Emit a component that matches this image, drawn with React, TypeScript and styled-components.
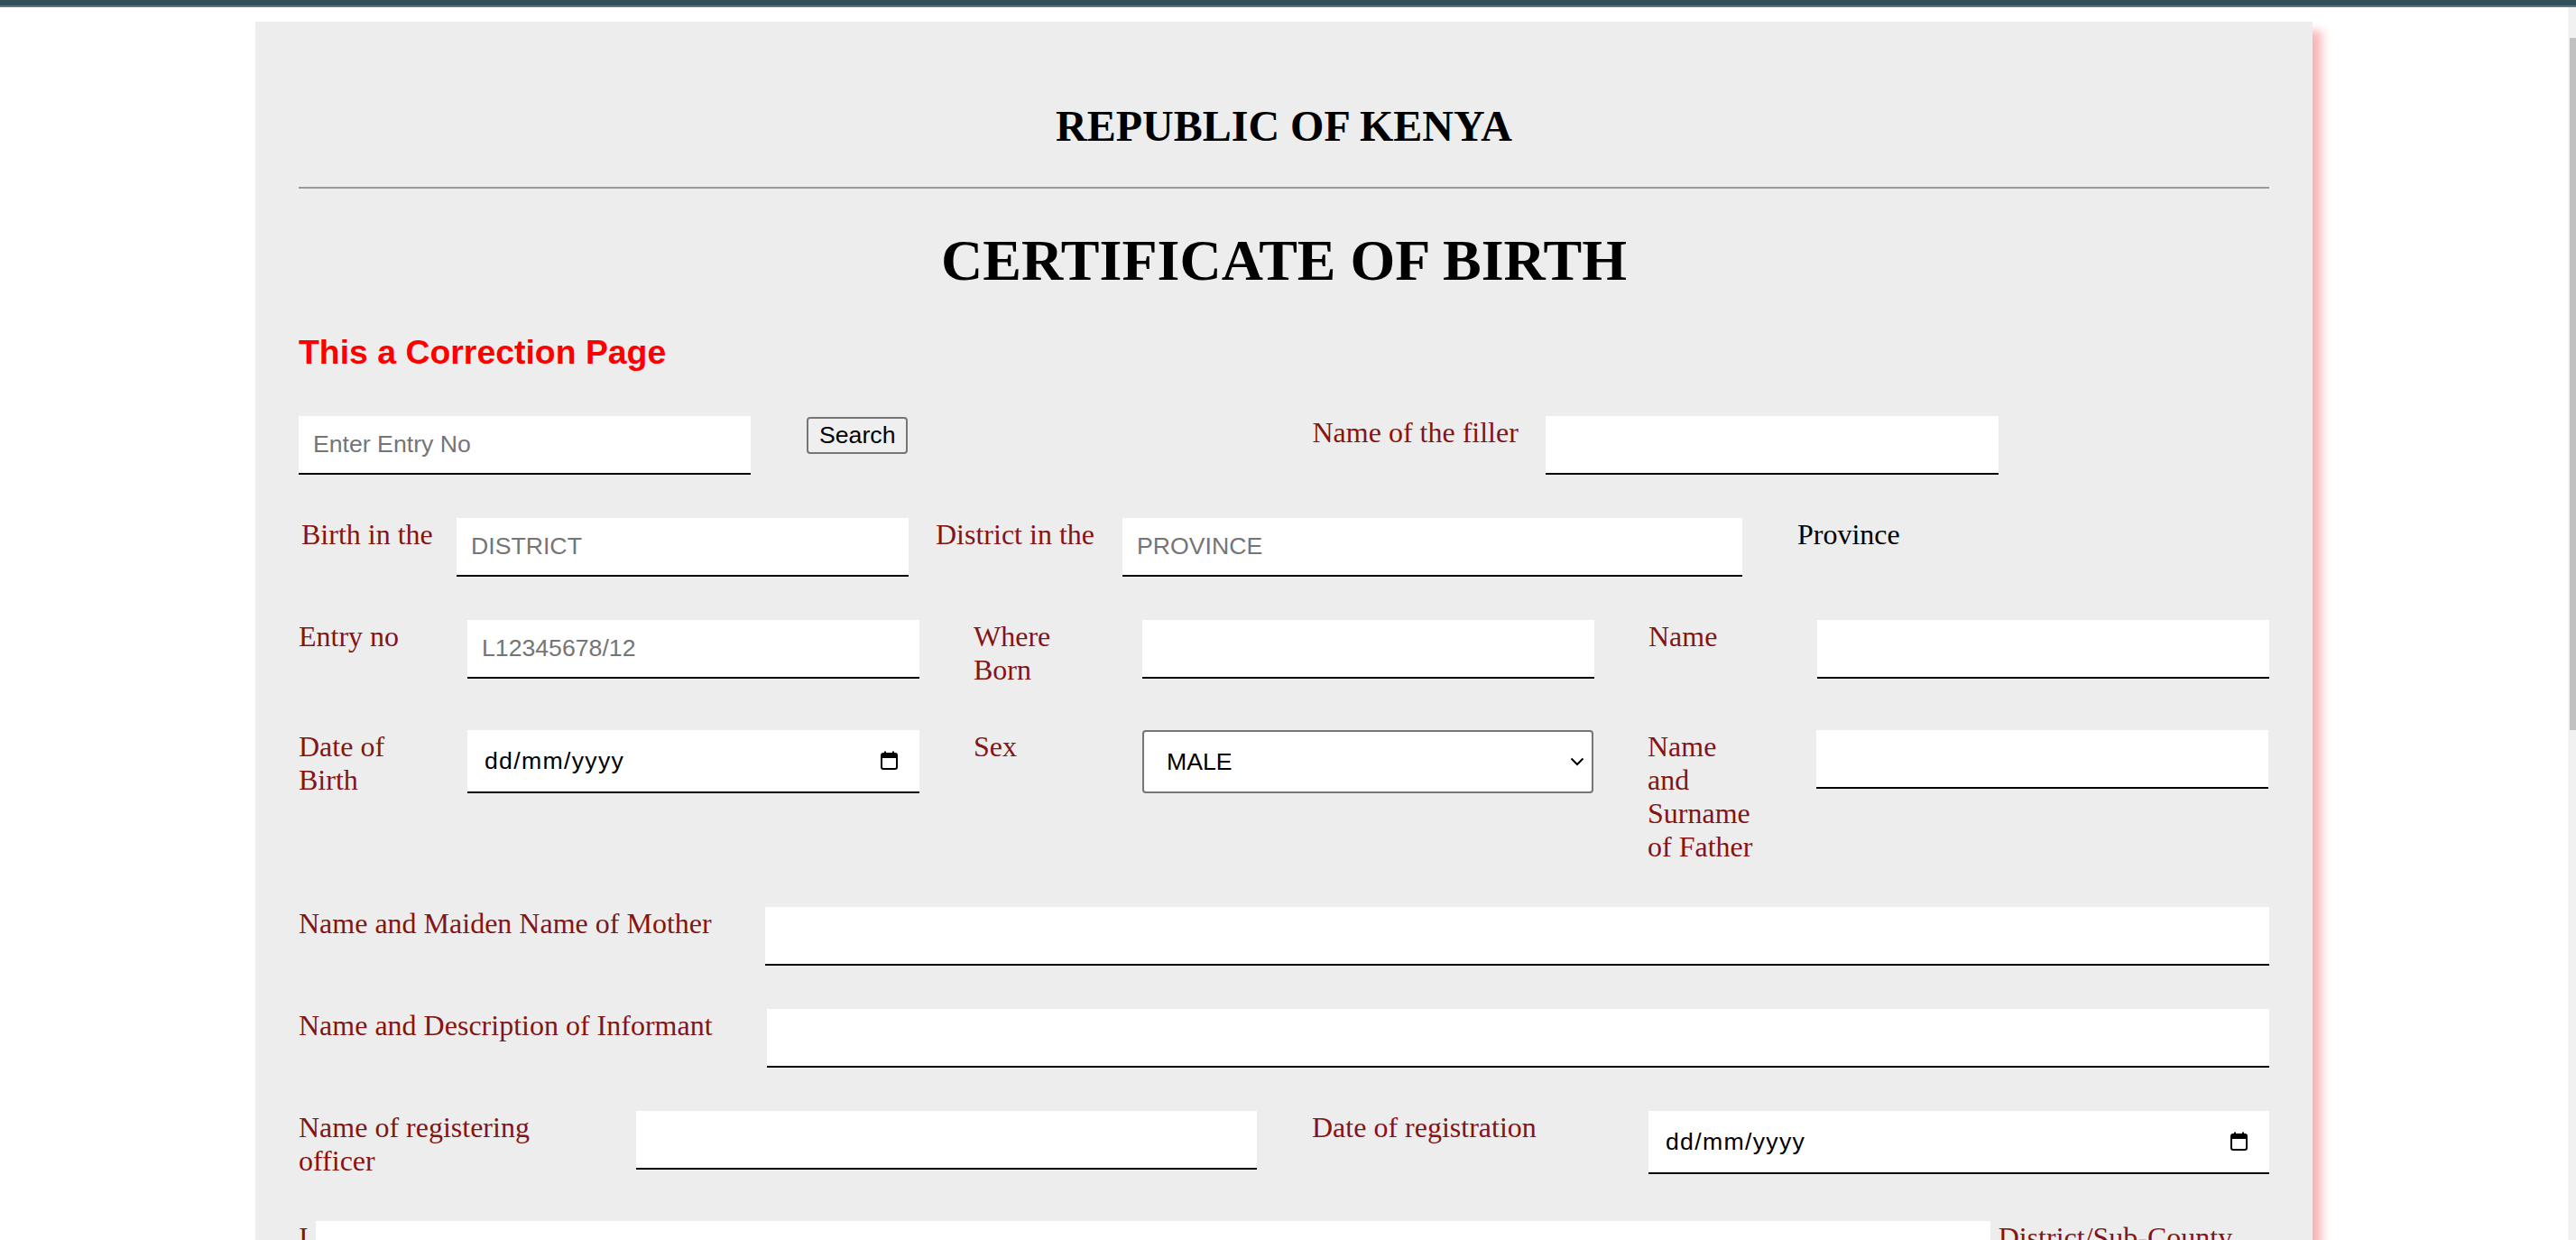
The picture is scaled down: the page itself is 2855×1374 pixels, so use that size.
import React from "react";
import styled, { createGlobalStyle } from "styled-components";

const GlobalStyle = createGlobalStyle`
  html, body {
    margin: 0;
    padding: 0;
    height: 100%;
    overflow: hidden;
    background: #ffffff;
  }
  body {
    font-family: "Liberation Serif", "Times New Roman", serif;
  }
`;

const TopBar = styled.div`
  height: 6px;
  background: #32505c;
  border-bottom: 2px solid #5b7682;
`;

const Viewport = styled.div`
  display: flex;
  height: calc(100vh - 8px);
`;

const Scroller = styled.main`
  flex: 1;
  min-width: 0;
  overflow-y: auto;
  scrollbar-width: none;
`;

const Rail = styled.aside`
  flex: none;
  width: 9px;
  box-sizing: border-box;
  padding: 34px 0 0 2px;
  background: #f1f1f1;
`;

const Thumb = styled.div`
  width: 7px;
  height: 767px;
  background: #c1c1c1;
`;

const Sheet = styled.section`
  width: 2280px;
  box-sizing: border-box;
  margin: 16px auto 40px;
  padding: 48px 48px 500px;
  background: #ededed;
  box-shadow: 10px 10px 10px #f8b4b4;
`;

const Country = styled.h2`
  margin: 40px 0;
  font-size: 48px;
  font-weight: bold;
  line-height: normal;
  text-align: center;
  color: #000;
`;

const Rule = styled.hr`
  height: 0;
  margin: 0 0 16px;
  border: none;
  border-top: 2px solid #9a9a9a;
`;

const Heading = styled.h1`
  margin: 43px 0;
  font-size: 64px;
  font-weight: bold;
  line-height: normal;
  text-align: center;
  color: #000;
`;

const Notice = styled.h3`
  margin: 37px 0 49px;
  font-family: "Liberation Sans", Arial, sans-serif;
  font-size: 37.4px;
  font-weight: bold;
  line-height: normal;
  color: #ff0000;
`;

const Row = styled.div<{ $gap?: number }>`
  display: flex;
  align-items: flex-start;
  gap: ${(p) => p.$gap ?? 0}px;
  margin-bottom: 48px;
`;

const Group = styled.div`
  display: flex;
  align-items: flex-start;
  flex: none;
`;

const Label = styled.label<{ $w?: number; $mr?: number; $ml?: number; $plain?: boolean }>`
  flex: none;
  width: ${(p) => (p.$w ? `${p.$w}px` : "auto")};
  margin: 0 ${(p) => p.$mr ?? 0}px 0 ${(p) => p.$ml ?? 0}px;
  font-size: 32px;
  line-height: normal;
  color: ${(p) => (p.$plain ? "#000000" : "#851414")};
`;

const Field = styled.input<{ $w?: number }>`
  flex: ${(p) => (p.$w ? "none" : 1)};
  width: ${(p) => (p.$w ? `${p.$w}px` : "auto")};
  min-width: 0;
  height: 65px;
  box-sizing: border-box;
  padding: 0 16px;
  border: none;
  border-bottom: 2px solid #000;
  border-radius: 0;
  background: #ffffff;
  color: #000;
  font-family: "Liberation Sans", Arial, sans-serif;
  font-size: 26.67px;
  outline: none;

  &::placeholder {
    color: #757575;
  }
`;

const DateBox = styled.div<{ $w: number }>`
  position: relative;
  flex: none;
  width: ${(p) => p.$w}px;
  height: 70px;
`;

const DateInput = styled.input`
  width: 100%;
  height: 100%;
  box-sizing: border-box;
  padding: 0 60px 0 19px;
  border: none;
  border-bottom: 2px solid #000;
  border-radius: 0;
  background: #ffffff;
  font-family: "Liberation Sans", Arial, sans-serif;
  font-size: 26.67px;
  letter-spacing: 1.3px;
  outline: none;

  &::placeholder {
    color: #000;
  }
`;

const CalendarIcon = styled.svg`
  position: absolute;
  right: 23px;
  top: 50%;
  width: 21px;
  height: 21px;
  margin-top: -12px;
  pointer-events: none;
`;

const SearchButton = styled.button`
  flex: none;
  margin: 1px 0 0 62px;
  padding: 3px 12px;
  border: 2px solid #767676;
  border-radius: 4px;
  background: #efefef;
  color: #000;
  font-family: "Liberation Sans", Arial, sans-serif;
  font-size: 26.67px;
  line-height: normal;
`;

const SelectBox = styled.div`
  position: relative;
  flex: none;
  width: 500px;
  height: 70px;
`;

const Select = styled.select`
  appearance: none;
  width: 100%;
  height: 100%;
  box-sizing: border-box;
  padding: 0 50px 0 25px;
  border: 2px solid #767676;
  border-radius: 4px;
  background: #ffffff;
  color: #000;
  font-family: "Liberation Sans", Arial, sans-serif;
  font-size: 26.67px;
  outline: none;
`;

const Chevron = styled.svg`
  position: absolute;
  right: 10px;
  top: 50%;
  width: 16px;
  height: 10px;
  margin-top: -5px;
  pointer-events: none;
`;

const SubmitButton = styled.button`
  padding: 10px 32px;
  border: 2px solid #767676;
  border-radius: 4px;
  background: #efefef;
  font-family: "Liberation Sans", Arial, sans-serif;
  font-size: 26.67px;
`;

const DateField = ({ w }: { w: number }) => (
  <DateBox $w={w}>
    <DateInput placeholder="dd/mm/yyyy" />
    <CalendarIcon viewBox="0 0 21 21">
      <rect x="2" y="3" width="17" height="17" rx="2" fill="none" stroke="#000" strokeWidth="2" />
      <rect x="2" y="3" width="17" height="5" fill="#000" />
      <rect x="5" y="0.5" width="2" height="3" fill="#000" />
      <rect x="14" y="0.5" width="2" height="3" fill="#000" />
    </CalendarIcon>
  </DateBox>
);

const App = () => {
  return (
    <>
      <GlobalStyle />
      <TopBar />
      <Viewport>
        <Scroller>
          <Sheet>
            <Country>REPUBLIC OF KENYA</Country>
            <Rule />
            <Heading>CERTIFICATE OF BIRTH</Heading>
            <Notice>This a Correction Page</Notice>

            <Row>
              <Field $w={501} placeholder="Enter Entry No" />
              <SearchButton>Search</SearchButton>
              <Label $ml={448} $mr={30}>Name of the filler</Label>
              <Field $w={502} />
            </Row>

            <Row>
              <Label $ml={3} $w={172}>Birth in the</Label>
              <Field $w={501} placeholder="DISTRICT" />
              <Label $ml={30} $w={207}>District in the</Label>
              <Field $w={687} placeholder="PROVINCE" />
              <Label $ml={61} $plain>Province</Label>
            </Row>

            <Row $gap={60}>
              <Group>
                <Label $w={125} $mr={62}>Entry no</Label>
                <Field $w={501} placeholder="L12345678/12" />
              </Group>
              <Group>
                <Label $w={125} $mr={62}>Where Born</Label>
                <Field $w={501} />
              </Group>
              <Group>
                <Label $w={125} $mr={62}>Name</Label>
                <Field $w={501} />
              </Group>
            </Row>

            <Row $gap={60}>
              <Group>
                <Label $w={125} $mr={62}>Date of Birth</Label>
                <DateField w={501} />
              </Group>
              <Group>
                <Label $w={125} $mr={62}>Sex</Label>
                <SelectBox>
                  <Select defaultValue="MALE">
                    <option value="MALE">MALE</option>
                    <option value="FEMALE">FEMALE</option>
                  </Select>
                  <Chevron viewBox="0 0 16 10" fill="none" stroke="#000" strokeWidth="2">
                    <path d="M1.5 1.5 L8 8 L14.5 1.5" />
                  </Chevron>
                </SelectBox>
              </Group>
              <Group>
                <Label $w={125} $mr={62}>Name and Surname of Father</Label>
                <Field $w={501} />
              </Group>
            </Row>

            <Row>
              <Label $w={517}>Name and Maiden Name of Mother</Label>
              <Field />
            </Row>

            <Row>
              <Label $w={519}>Name and Description of Informant</Label>
              <Field />
            </Row>

            <Row $gap={61}>
              <Group>
                <Label $w={300} $mr={74}>Name of registering officer</Label>
                <Field $w={688} />
              </Group>
              <Group>
                <Label $w={300} $mr={73}>Date of registration</Label>
                <DateField w={688} />
              </Group>
            </Row>

            <Row>
              <Label $mr={8}>I</Label>
              <Field $w={1856} />
              <Label $ml={9}>District/Sub-County</Label>
            </Row>

            <Row>
              <Label $w={517}>Registrar of Births and Deaths</Label>
              <Field />
            </Row>

            <Row $gap={61}>
              <Group>
                <Label $w={300} $mr={74}>Signature of Registrar</Label>
                <Field $w={688} />
              </Group>
              <Group>
                <Label $w={300} $mr={73}>Date of issue</Label>
                <DateField w={688} />
              </Group>
            </Row>

            <Row>
              <SubmitButton>Update Entry</SubmitButton>
            </Row>
          </Sheet>
        </Scroller>
        <Rail>
          <Thumb />
        </Rail>
      </Viewport>
    </>
  );
};

export default App;
